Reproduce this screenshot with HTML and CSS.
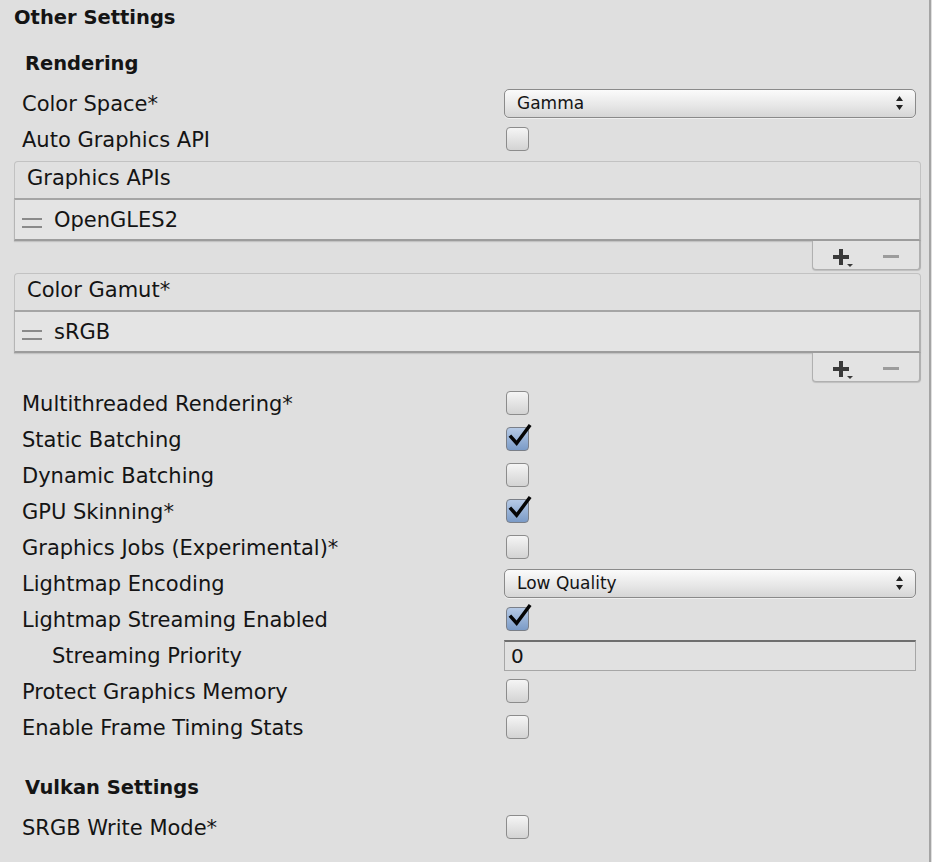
FILE: index.html
```html
<!DOCTYPE html>
<html lang="en">
<head>
<meta charset="UTF-8">
<title>Other Settings</title>
<link rel="stylesheet" href="styles.css">
</head>
<body>
<div class="inspector">
  <div class="section-title">Other Settings</div>

  <div class="group-title">Rendering</div>
  <div class="row">
    <span class="label">Color Space*</span>
    <div class="popup">Gamma
      <svg class="popup-arrows" width="7" height="14" viewBox="0 0 7 14"><path d="M3.5 0L7 5H0z M3.5 14L0 9h7z" fill="#222"/></svg>
    </div>
  </div>
  <div class="row">
    <span class="label">Auto Graphics API</span>
    <span class="checkbox"></span>
  </div>

  <div class="reorder-list">
    <div class="list-header">Graphics APIs</div>
    <div class="list-body">
      <span class="handle"></span>OpenGLES2
    </div>
    <div class="list-footer">
      <svg class="add" width="22" height="20" viewBox="0 0 22 20"><path d="M6 0h4v6h6v4h-6v6H6v-6H0V6h6z" fill="#3a3a3a"/><path d="M14 15h6l-3 3z" fill="#3a3a3a"/></svg>
      <svg class="remove" width="16" height="4" viewBox="0 0 16 4"><rect width="16" height="3" fill="#9c9c9c"/></svg>
    </div>
  </div>

  <div class="reorder-list second">
    <div class="list-header">Color Gamut*</div>
    <div class="list-body">
      <span class="handle"></span>sRGB
    </div>
    <div class="list-footer">
      <svg class="add" width="22" height="20" viewBox="0 0 22 20"><path d="M6 0h4v6h6v4h-6v6H6v-6H0V6h6z" fill="#3a3a3a"/><path d="M14 15h6l-3 3z" fill="#3a3a3a"/></svg>
      <svg class="remove" width="16" height="4" viewBox="0 0 16 4"><rect width="16" height="3" fill="#9c9c9c"/></svg>
    </div>
  </div>

  <div class="rows">
    <div class="row">
      <span class="label">Multithreaded Rendering*</span>
      <span class="checkbox"></span>
    </div>
    <div class="row">
      <span class="label">Static Batching</span>
      <span class="checkbox checked"><svg viewBox="0 0 28 28"><path d="M3 13l7 8L24 2"/></svg></span>
    </div>
    <div class="row">
      <span class="label">Dynamic Batching</span>
      <span class="checkbox"></span>
    </div>
    <div class="row">
      <span class="label">GPU Skinning*</span>
      <span class="checkbox checked"><svg viewBox="0 0 28 28"><path d="M3 13l7 8L24 2"/></svg></span>
    </div>
    <div class="row">
      <span class="label">Graphics Jobs (Experimental)*</span>
      <span class="checkbox"></span>
    </div>
    <div class="row">
      <span class="label">Lightmap Encoding</span>
      <div class="popup">Low Quality
        <svg class="popup-arrows" width="7" height="14" viewBox="0 0 7 14"><path d="M3.5 0L7 5H0z M3.5 14L0 9h7z" fill="#222"/></svg>
      </div>
    </div>
    <div class="row">
      <span class="label">Lightmap Streaming Enabled</span>
      <span class="checkbox checked"><svg viewBox="0 0 28 28"><path d="M3 13l7 8L24 2"/></svg></span>
    </div>
    <div class="row">
      <span class="label indent">Streaming Priority</span>
      <div class="textfield">0</div>
    </div>
    <div class="row">
      <span class="label">Protect Graphics Memory</span>
      <span class="checkbox"></span>
    </div>
    <div class="row">
      <span class="label">Enable Frame Timing Stats</span>
      <span class="checkbox"></span>
    </div>
  </div>

  <div class="group-title vulkan">Vulkan Settings</div>
  <div class="row srgb">
    <span class="label">SRGB Write Mode*</span>
    <span class="checkbox"></span>
  </div>
</div>
</body>
</html>
```

FILE: styles.css
```css
body {
  margin: 0;
  background-color: #dfdfdf;
  color: #141414;
  font-family: "DejaVu Sans", "Liberation Sans", sans-serif;
}
.inspector {
  box-sizing: border-box;
  width: 931px;
  min-height: 862px;
  border-right: 2px solid #a4a4a4;
}
.section-title {
  height: 33px;
  padding-top: 1px;
  line-height: 34px;
  padding-left: 14px;
  font-size: 19.5px;
  font-weight: bold;
}
.group-title {
  height: 36px;
  line-height: 36px;
  margin: 12px 0 3px;
  padding-left: 25px;
  font-size: 19.5px;
  font-weight: bold;
}
.group-title.vulkan {
  margin: 25px 0 3px;
}
.row {
  display: grid;
  grid-template-columns: 482px 1fr;
  align-items: center;
  height: 36px;
  padding: 0 13px 0 22px;
  font-size: 21px;
}
.label {
  white-space: nowrap;
  padding-top: 2px;
}
.label.indent {
  padding-left: 30px;
}
.rows {
  margin-top: 3px;
}
.popup {
  box-sizing: border-box;
  height: 29px;
  display: flex;
  align-items: center;
  justify-content: space-between;
  padding: 0 12px 0 12px;
  font-size: 17px;
  border: 1px solid #8a8a8a;
  border-radius: 5px;
  background: linear-gradient(#fbfbfb, #e6e6e6 60%, #d6d6d6);
  box-shadow: 0 1px 0 rgba(255,255,255,0.5);
}
.popup-arrows {
  display: block;
}
.checkbox {
  box-sizing: border-box;
  position: relative;
  width: 23px;
  height: 24px;
  margin-left: 2px;
  border: 1px solid #8c8c8c;
  border-radius: 4px;
  background: linear-gradient(#f5f5f5, #d3d3d3);
}
.checkbox.checked {
  background: linear-gradient(#b6cae6, #7b9bc7);
  border-color: #7a7f88;
}
.checkbox svg {
  position: absolute;
  left: 0;
  top: -5px;
  width: 27px;
  height: 27px;
  overflow: visible;
}
.checkbox svg path {
  fill: none;
  stroke: #050505;
  stroke-width: 3.6;
  stroke-linejoin: miter;
}
.textfield {
  box-sizing: border-box;
  height: 31px;
  padding-left: 6px;
  line-height: 28px;
  font-size: 20px;
  border: 1px solid #a6a6a6;
  border-top: 2px solid #6e6e6e;
  background-color: #e1e1e1;
}
.reorder-list {
  margin: 4px 8px 0 14px;
  font-size: 21px;
}
.reorder-list.second {
  margin-top: 3px;
}
.list-header {
  box-sizing: border-box;
  height: 37px;
  line-height: 33px;
  padding-left: 12px;
  border: 1px solid #c2c2c2;
  border-bottom: none;
  border-radius: 4px 4px 0 0;
  background-color: #e0e0e0;
}
.list-body {
  box-sizing: border-box;
  height: 43px;
  display: flex;
  align-items: center;
  border: 1px solid #b5b5b5;
  border-top: 2px solid #a5a5a5;
  border-bottom: 2px solid #9c9c9c;
  border-right: 2px solid #b0b0b0;
  background-color: #e4e4e4;
  box-shadow: 0 1px 1px rgba(0,0,0,0.12);
}
.handle {
  width: 20px;
  height: 10px;
  margin: 6px 12px 0 7px;
  border-top: 2px solid #8a8a8a;
  border-bottom: 2px solid #8a8a8a;
  box-sizing: border-box;
}
.list-footer {
  box-sizing: border-box;
  width: 109px;
  height: 29px;
  margin-left: auto;
  display: flex;
  align-items: flex-start;
  padding: 8px 0 0 20px;
  border: 1px solid #b0b0b0;
  border-top: none;
  border-right: 2px solid #b0b0b0;
  border-radius: 0 0 4px 4px;
  background-color: #e3e3e3;
  box-shadow: 0 1px 1px rgba(0,0,0,0.15);
}
.list-footer .remove {
  margin: 6px 0 0 28px;
}
```
